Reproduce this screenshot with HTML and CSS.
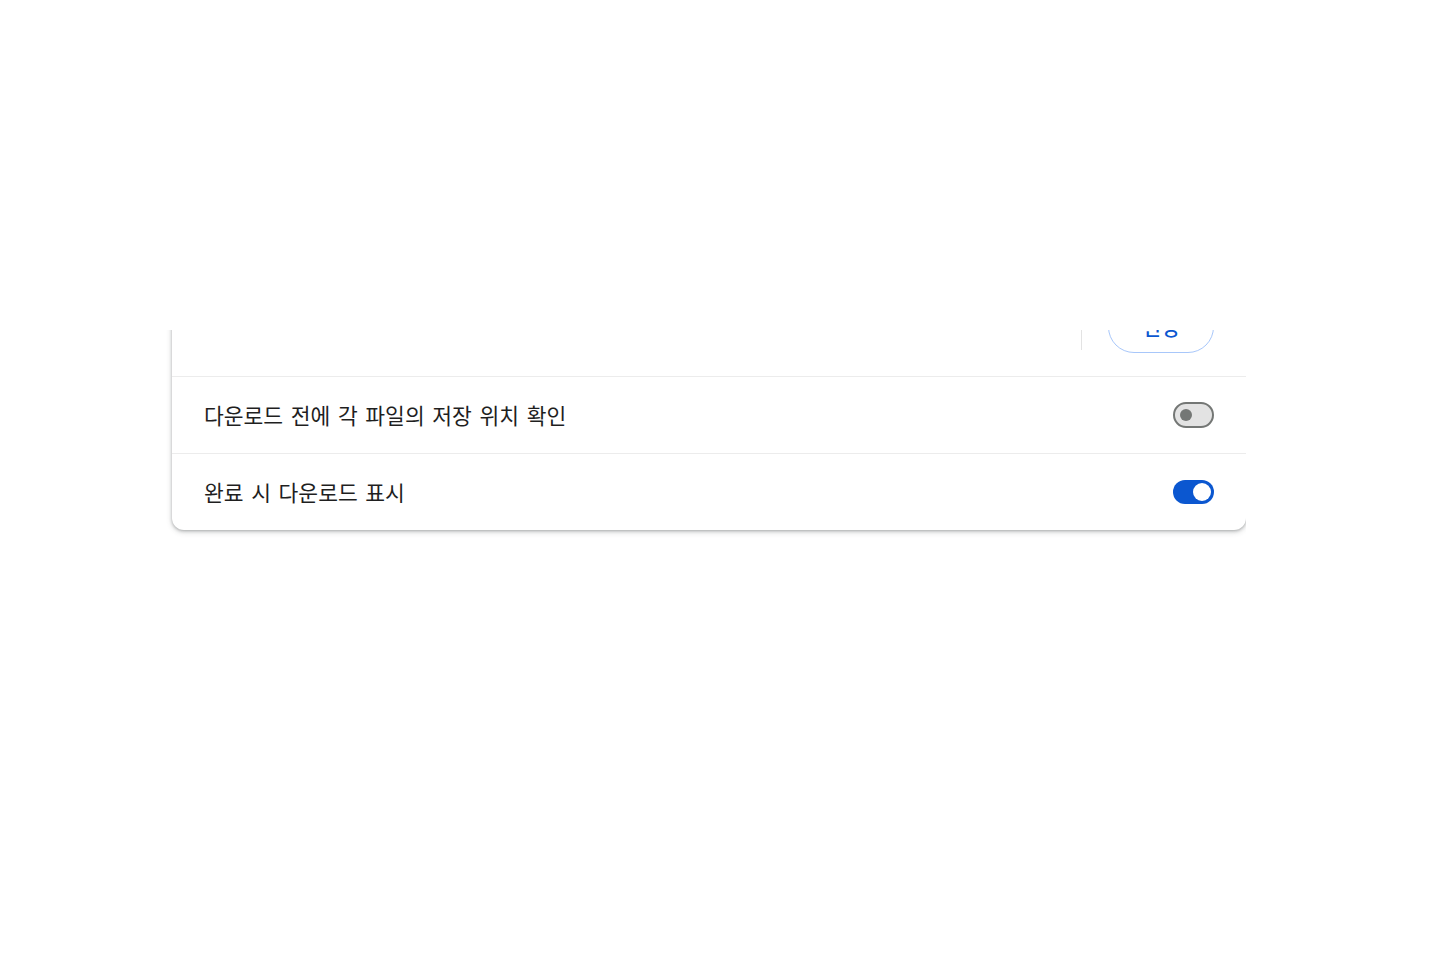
FILE: index.html
```html
<!DOCTYPE html>
<html lang="ko">
<head>
<meta charset="utf-8">
<title>다운로드 설정</title>
<link rel="stylesheet" href="styles.css">
</head>
<body>
<div class="top-space"></div>
<div class="clip">
  <section class="card">
    <div class="row row-location">
      <div class="row-text"></div>
      <div class="separator"></div>
      <button class="btn-outline">변경</button>
    </div>
    <div class="row">
      <div class="label">다운로드 전에 각 파일의 저장 위치 확인</div>
      <div class="toggle off" role="switch" aria-checked="false"><span class="knob"></span></div>
    </div>
    <div class="row">
      <div class="label">완료 시 다운로드 표시</div>
      <div class="toggle on" role="switch" aria-checked="true"><span class="knob"></span></div>
    </div>
  </section>
</div>
</body>
</html>
```
FILE: styles.css
```css
html, body {
  margin: 0;
  padding: 0;
  background: #ffffff;
}
body {
  font-family: "Noto Sans CJK KR", "Noto Sans", sans-serif;
  color: #1f1f1f;
}
.top-space {
  height: 330px;
}
.clip {
  overflow: hidden;
  padding: 0 0 20px 172px;
  width: 1074px;
}
.card {
  width: 1074px;
  margin-top: -52px;
  background: #ffffff;
  border-radius: 0 0 12px 12px;
  box-shadow: 0 1px 3px rgba(60, 64, 67, 0.35), 0 2px 5px 1px rgba(60, 64, 67, 0.15);
}
.row {
  display: flex;
  align-items: center;
  justify-content: space-between;
  height: 76px;
  padding: 0 32px;
  border-top: 1px solid #ececec;
}
.row:first-child {
  border-top: none;
}
.row-location {
  height: 98px;
  justify-content: flex-start;
}
.row-text {
  flex: 1;
}
.label {
  font-size: 21.5px;
  line-height: 28px;
  word-spacing: 1.6px;
  color: #1f1f1f;
}
.separator {
  width: 1px;
  height: 46px;
  background: #e3e3e3;
  margin-right: 26px;
}
.btn-outline {
  width: 106px;
  height: 52px;
  border: 1px solid #a8c7fa;
  border-radius: 26px;
  background: #ffffff;
  color: #0b57d0;
  font-family: "Noto Sans CJK KR", sans-serif;
  font-size: 20px;
  font-weight: 500;
  padding: 0;
}
.toggle {
  position: relative;
  width: 41px;
  height: 24px;
  border-radius: 13px;
  box-sizing: border-box;
  flex: none;
}
.toggle.off {
  height: 26px;
  background: #e3e3e3;
  border: 2px solid #747775;
}
.toggle.on {
  background: #0b57d0;
}
.knob {
  position: absolute;
  border-radius: 50%;
}
.toggle.off .knob {
  width: 12px;
  height: 12px;
  left: 5px;
  top: 5px;
  background: #747775;
}
.toggle.on .knob {
  width: 18px;
  height: 18px;
  right: 3px;
  top: 3px;
  background: #ffffff;
}
```
